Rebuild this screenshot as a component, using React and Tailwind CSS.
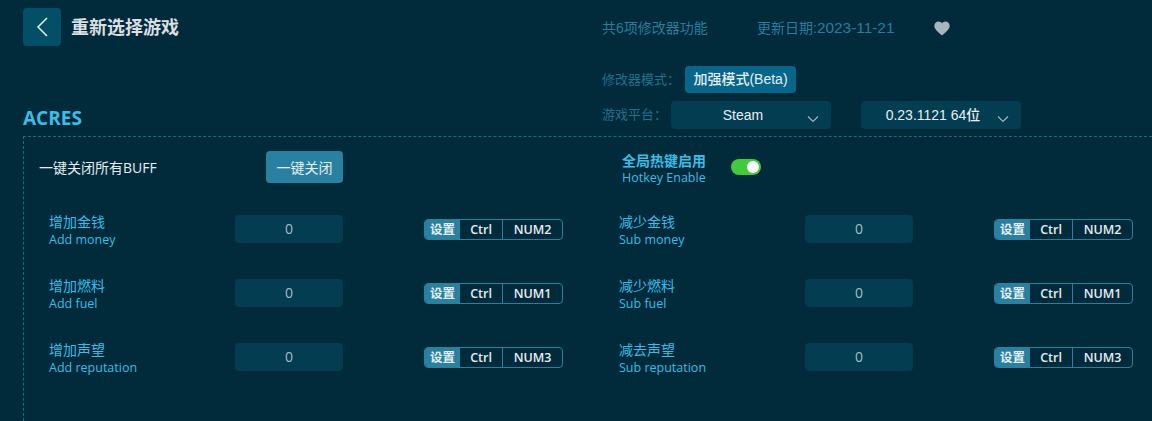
const ui = '"Open Sans","Noto Sans CJK SC",sans-serif';
const arial = '"Liberation Sans","Noto Sans CJK SC",sans-serif';

function Chevron({ className }) {
  return (
    <svg className={className} width="12" height="8" viewBox="0 0 12 8" fill="none" stroke="#9fb2bc" strokeWidth="1.2">
      <path d="M1 1.500 L6 6.500 L11 1.500" />
    </svg>
  );
}

function Select({ text }) {
  return (
    <div className="relative flex h-[28px] w-[160px] items-center justify-center rounded-[4px] bg-[#033d52] pr-[16px] text-[14px] font-medium text-[#e6eef2]">
      <span style={{ fontFamily: arial }}>{text}</span>
      <Chevron className="absolute right-[12px] top-[14px]" />
    </div>
  );
}

function Keys({ k }) {
  return (
    <div className="flex h-[21px] w-[139px] overflow-hidden rounded-[4px] border border-[#2a80a0] text-[12.5px] font-semibold leading-[19px] text-[#e6eef2]">
      <span className="w-[35px] shrink-0 bg-[#2a80a0] text-center">设置</span>
      <span className="w-[43px] shrink-0 border-r border-[#2a80a0] text-center">Ctrl</span>
      <span className="flex-1 text-center">{k}</span>
    </div>
  );
}

function Row({ zh, en, k }) {
  return (
    <div className="flex h-[64px] w-[570px] items-start">
      <div className="w-[186px] pt-[1px] text-[#3cbde8]">
        <div className="text-[14px] leading-[18px]">{zh}</div>
        <div className="text-[12.5px] leading-[18px]">{en}</div>
      </div>
      <div className="mt-[3px] flex h-[28px] w-[108px] items-center justify-center rounded-[4px] bg-[#033d52] pb-[1px] text-[14px] text-[#a9bcc6]">0</div>
      <div className="ml-[81px] mt-[7px]"><Keys k={k} /></div>
    </div>
  );
}

export default function App() {
  return (
    <div className="h-[421px] w-[1152px] overflow-hidden bg-[#012a3a] pl-[23px] pt-[8px]" style={{ fontFamily: ui }}>
      <div className="flex h-[128px] items-start">
        <div className="flex h-full w-[579px] flex-col justify-between">
          <div className="flex items-center">
            <div className="flex h-[38px] w-[38px] items-center justify-center rounded-[4px] bg-[#034f68]">
              <svg width="14" height="20" viewBox="0 0 14 20" fill="none" stroke="#e8eef1" strokeWidth="1.500">
                <path d="M12 1 L3 10 L12 19" />
              </svg>
            </div>
            <span className="ml-[10px] text-[18px] font-bold text-[#d9dfe2]">重新选择游戏</span>
          </div>
          <div className="mb-[6px] text-[19px] font-bold leading-[24px] text-[#3cbde8]">ACRES</div>
        </div>
        <div className="flex flex-col">
          <div className="mt-[10px] flex h-[20px] items-center text-[14px] text-[#2a7d9c]" style={{ fontFamily: arial }}>
            <span className="w-[155px]">共6项修改器功能</span>
            <span className="w-[177px]">更新日期:<span className="text-[15.4px]">2023-11-21</span></span>
            <svg width="16" height="15" viewBox="0 0 24 22" fill="#a8b6c0"><path d="M12 21.500 C5 15.500 .5 11.600 .5 6.800 .5 3 3.400 .5 6.800 .5 9 .5 11 1.600 12 3.400 13 1.600 15 .5 17.200 .5 20.600 .5 23.500 3 23.500 6.800 23.500 11.600 19 15.500 12 21.500Z" /></svg>
          </div>
          <div className="mt-[28px] flex h-[27px] items-center">
            <span className="w-[83px] text-[13px] text-[#24708f]">修改器模式：</span>
            <span className="flex h-[27px] w-[111px] items-center justify-center rounded-[4px] bg-[#07668a] text-[14px] font-medium text-[#e6eef2]" style={{ fontFamily: arial }}>加强模式(Beta)</span>
          </div>
          <div className="mt-[8px] flex h-[28px] items-center">
            <span className="w-[69px] text-[13px] text-[#24708f]">游戏平台：</span>
            <Select text="Steam" />
            <div className="ml-[30px]"><Select text="0.23.1121 64位" /></div>
          </div>
        </div>
      </div>
      <div className="h-[300px] border-l border-t border-dashed border-[#1e6a85] pl-[15px] pt-[14px]">
        <div className="flex h-[61px] items-start">
          <span className="mt-[7px] w-[227px] text-[14px] leading-[20px] text-[#e6eef2]">一键关闭所有BUFF</span>
          <span className="flex h-[32px] w-[77px] items-center justify-center rounded-[4px] bg-[#2a80a0] text-[14px] text-[#e6eef2]">一键关闭</span>
          <div className="ml-[279px] w-[109px] pt-[1px] text-[#3cbde8]">
            <div className="text-[14px] font-bold leading-[17px]">全局热键启用</div>
            <div className="text-[12.5px] leading-[17px]">Hotkey Enable</div>
          </div>
          <div className="mt-[8px] flex h-[16px] w-[30px] items-center justify-end rounded-full bg-[#43c93d] pr-[2px]">
            <div className="h-[12px] w-[12px] rounded-full bg-white" />
          </div>
        </div>
        <div className="ml-[10px] grid w-[1140px] grid-cols-2">
          <Row zh="增加金钱" en="Add money" k="NUM2" />
          <Row zh="减少金钱" en="Sub money" k="NUM2" />
          <Row zh="增加燃料" en="Add fuel" k="NUM1" />
          <Row zh="减少燃料" en="Sub fuel" k="NUM1" />
          <Row zh="增加声望" en="Add reputation" k="NUM3" />
          <Row zh="减去声望" en="Sub reputation" k="NUM3" />
        </div>
      </div>
    </div>
  );
}
